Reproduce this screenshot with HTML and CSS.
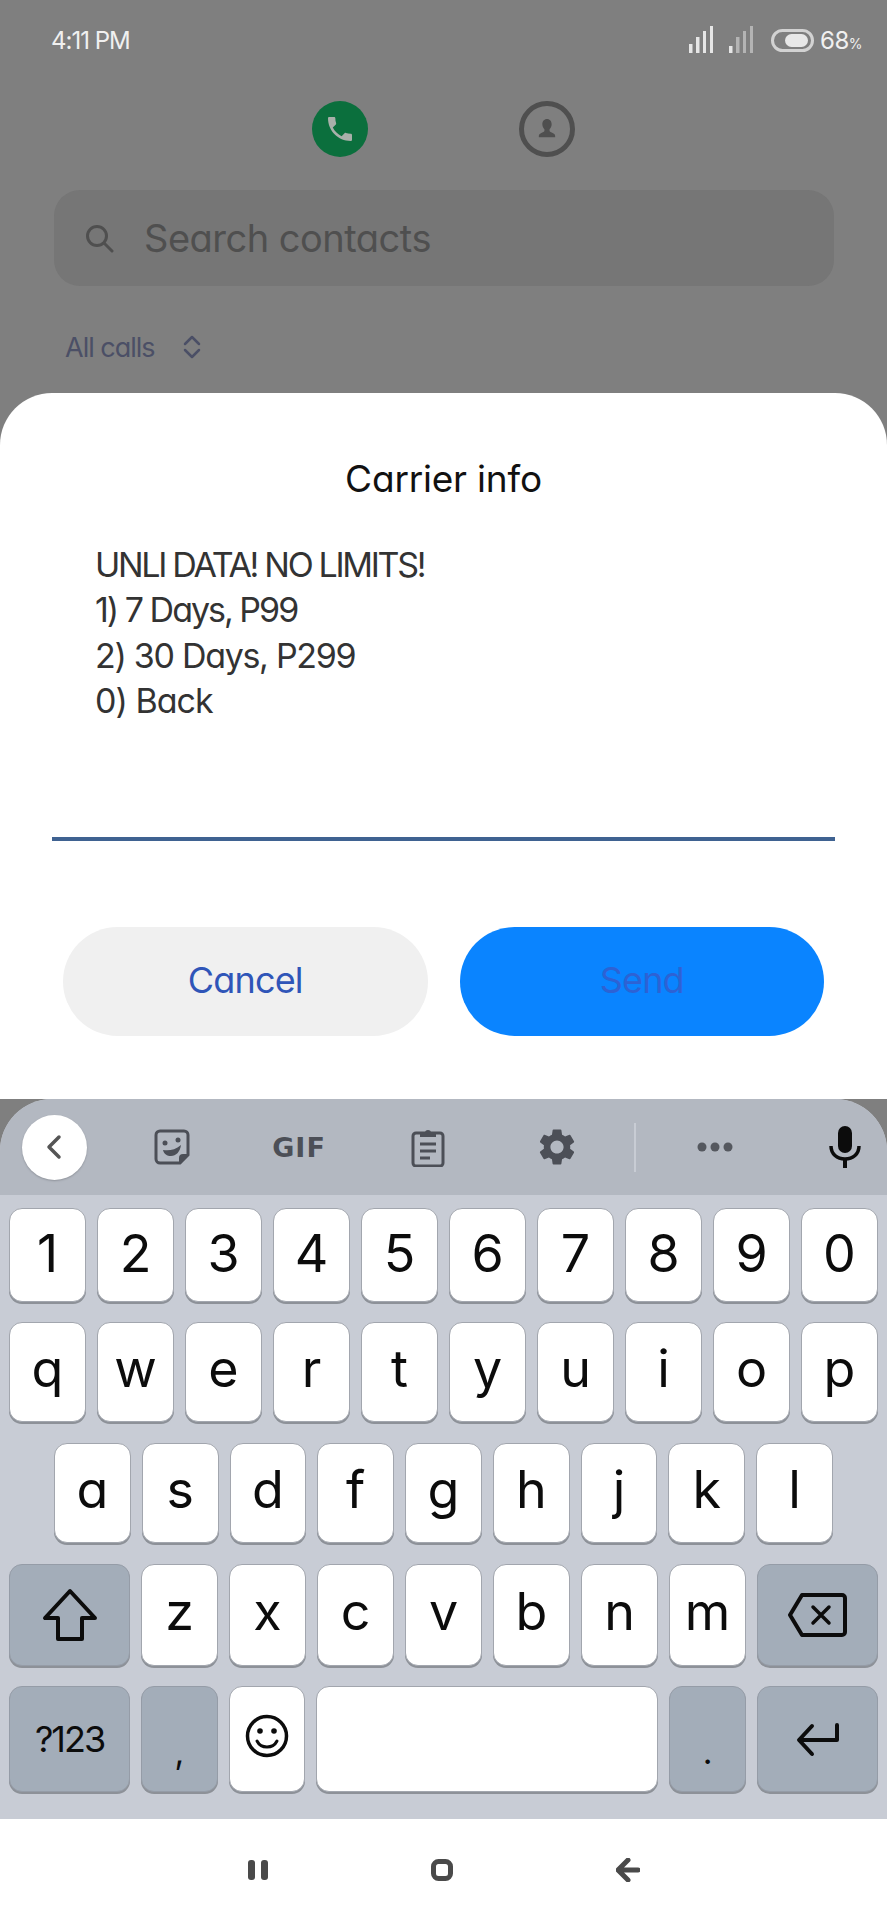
FILE: index.html

```html
<!DOCTYPE html>
<html lang="en">
<head>
    <meta charset="UTF-8">
    <title>Carrier info</title>
    <link rel="stylesheet" href="styles.css">
</head>
<body>
<div class="app">
  <div class="statusbar">
    <span class="time">4:11 PM</span>
    <div class="status-icons">
      <svg class="signal" viewBox="0 0 26 28" width="26" height="28"><g fill="#e6e6e6"><rect x="0" y="18" width="3.500" height="9"/><rect x="7" y="11" width="3.500" height="16"/><rect x="14" y="5" width="3" height="22"/><rect x="21" y="0" width="3" height="27"/></g></svg>
      <svg class="signal" viewBox="0 0 26 28" width="26" height="28"><rect x="0" y="20" width="3.500" height="7" fill="#e6e6e6"/><g fill="#b4b4b4"><rect x="7" y="11" width="3.500" height="16"/><rect x="14" y="5" width="3" height="22"/><rect x="21" y="0" width="3" height="27"/></g></svg>
      <div class="battery"><div class="battery-fill"></div></div>
      <span class="percent">68<small>%</small></span>
    </div>
  </div>

  <div class="tabs">
    <div class="tab tab-on">
      <svg viewBox="0 0 24 24" width="32" height="32"><path fill="#a9b0aa" d="M6.6 10.8c1.4 2.8 3.8 5.1 6.6 6.6l2.2-2.2c.3-.3.7-.4 1-.2 1.1.4 2.300.6 3.600.6.600 0 1 .4 1 1V20c0 .6-.4 1-1 1C10.600 21 3 13.400 3 4c0-.6.400-1 1-1h3.500c.6 0 1 .4 1 1 0 1.300.2 2.500.6 3.600.1.300 0 .7-.2 1z"/></svg>
    </div>
    <div class="tab tab-off">
      <svg viewBox="0 0 24 24" width="28" height="28"><path fill="#4f4f4f" d="M12 3.500c2.500 0 4 2 4 4.500 0 1.800-.8 3.200-1.800 4.200v1.300c0 .8 1.400 1.300 3 2.100 1 .5 1.800 1.100 1.800 2.400v1H5v-1c0-1.300.8-1.900 1.800-2.400 1.600-.8 3-1.300 3-2.100v-1.300C8.800 11.200 8 9.800 8 8c0-2.500 1.500-4.500 4-4.500z"/></svg>
    </div>
  </div>

  <div class="search">
    <svg viewBox="0 0 30 30" width="30" height="30"><circle cx="13" cy="13" r="9.500" fill="none" stroke="#4f4f4f" stroke-width="3"/><path d="M20 20l8 8" stroke="#4f4f4f" stroke-width="3" stroke-linecap="round"/></svg>
    <span>Search contacts</span>
  </div>

  <div class="filter">
    <span>All calls</span>
    <svg viewBox="0 0 20 24" width="20" height="24"><path d="M3 9l7-7 7 7M3 15l7 7 7-7" fill="none" stroke="#4b4f66" stroke-width="2.500" stroke-linecap="round" stroke-linejoin="round"/></svg>
  </div>
</div>

<div class="sheet">
  <h2 class="sheet-title">Carrier info</h2>
  <div class="message">
    <div class="msg-caps">UNLI DATA! NO LIMITS!</div>
    <div class="msg-tight">1) 7 Days, P99</div>
    <div class="msg-loose">2) 30 Days, P299</div>
    <div>0) Back</div>
  </div>
  <div class="reply-line"></div>
  <div class="buttons">
    <div class="btn btn-cancel">Cancel</div>
    <div class="btn btn-send">Send</div>
  </div>
</div>

<div class="keyboard">
  <div class="toolbar">
    <div class="tool">
      <div class="tool-back">
        <svg viewBox="0 0 16 26" width="16" height="26"><path d="M13 3L3 13l10 10" fill="none" stroke="#555" stroke-width="3.500" stroke-linecap="round" stroke-linejoin="round"/></svg>
      </div>
    </div>
    <div class="tool">
      <svg viewBox="0 0 36 36" width="36" height="36"><path d="M6 2h24a4 4 0 0 1 4 4v20l-8 8H6a4 4 0 0 1-4-4V6a4 4 0 0 1 4-4z" fill="none" stroke="#4c4f57" stroke-width="3"/><path d="M34 25h-5a4 4 0 0 0-4 4v5z" fill="#4c4f57"/><circle cx="11" cy="14" r="2.500" fill="#4c4f57"/><circle cx="24" cy="11" r="2.500" fill="#4c4f57"/><path d="M9 21c6 1 12 0 18-5-1 7-5 11-10 11-4 0-7-2-8-6z" fill="#4c4f57"/></svg>
    </div>
    <div class="tool tool-gif">GIF</div>
    <div class="tool">
      <svg viewBox="0 0 34 40" width="34" height="40"><path d="M5 6h24a3 3 0 0 1 3 3v27a3 3 0 0 1-3 3H5a3 3 0 0 1-3-3V9a3 3 0 0 1 3-3z" fill="none" stroke="#4c4f57" stroke-width="3"/><path d="M9 10V6h5a3 3 0 0 1 6 0h5v4z" fill="#4c4f57"/><path d="M9 17h16M9 24h16M9 31h10" stroke="#4c4f57" stroke-width="3"/></svg>
    </div>
    <div class="tool">
      <svg viewBox="0 0 24 24" width="44" height="44"><path fill="#4c4f57" fill-rule="evenodd" d="M19.140 12.940c.04-.3.06-.61.06-.94 0-.32-.02-.64-.07-.94l2.030-1.580a.49.49 0 0 0 .12-.61l-1.920-3.320a.488.488 0 0 0-.59-.22l-2.390.96c-.5-.38-1.030-.7-1.620-.94l-.36-2.540a.484.484 0 0 0-.48-.41h-3.840c-.24 0-.43.17-.47.41l-.36 2.540c-.59.24-1.130.57-1.620.94l-2.390-.96c-.22-.08-.47 0-.59.22L2.740 8.870c-.12.21-.08.47.12.61l2.030 1.580c-.05.3-.09.63-.09.94s.02.64.07.94l-2.030 1.580a.49.49 0 0 0-.12.61l1.920 3.320c.12.22.37.29.59.22l2.390-.96c.5.38 1.030.7 1.620.94l.36 2.540c.05.24.24.41.48.41h3.840c.24 0 .44-.17.47-.41l.36-2.540c.59-.24 1.130-.56 1.620-.94l2.390.96c.22.08.47 0 .59-.22l1.920-3.320c.12-.22.07-.47-.12-.61l-2.010-1.580zM12 15.600c-1.980 0-3.600-1.620-3.600-3.600s1.620-3.600 3.600-3.600 3.600 1.620 3.600 3.600-1.620 3.600-3.600 3.600z"/></svg>
    </div>
    <div class="tool"><div class="tool-divider"></div></div>
    <div class="tool">
      <svg viewBox="0 0 36 10" width="36" height="10"><g fill="#55585f"><circle cx="5" cy="5" r="4.500"/><circle cx="18" cy="5" r="4.500"/><circle cx="31" cy="5" r="4.500"/></g></svg>
    </div>
    <div class="tool tool-mic">
      <svg viewBox="0 0 32 42" width="32" height="42"><rect x="9" y="0" width="14" height="27" rx="7" fill="#0c0c0c"/><path d="M2 20c0 8 6 13 14 13s14-5 14-13" fill="none" stroke="#0c0c0c" stroke-width="3.500"/><rect x="14" y="32" width="4" height="10" fill="#0c0c0c"/></svg>
    </div>
  </div>

  <div class="keys">
    <div class="row row-digits">
      <div class="key">1</div><div class="key">2</div><div class="key">3</div><div class="key">4</div><div class="key">5</div>
      <div class="key">6</div><div class="key">7</div><div class="key">8</div><div class="key">9</div><div class="key">0</div>
    </div>
    <div class="row row-top">
      <div class="key">q</div><div class="key">w</div><div class="key">e</div><div class="key">r</div><div class="key">t</div>
      <div class="key">y</div><div class="key">u</div><div class="key">i</div><div class="key">o</div><div class="key">p</div>
    </div>
    <div class="row row-home">
      <div class="key">a</div><div class="key">s</div><div class="key">d</div><div class="key">f</div><div class="key">g</div>
      <div class="key">h</div><div class="key">j</div><div class="key">k</div><div class="key">l</div>
    </div>
    <div class="row row-bottom">
      <div class="key key-fn key-wide">
        <svg viewBox="0 0 56 54" width="56" height="54"><path d="M28 3L3 30h13v21h24V30h13z" fill="none" stroke="#0c0c0c" stroke-width="4" stroke-linejoin="round"/></svg>
      </div>
      <div class="key">z</div><div class="key">x</div><div class="key">c</div><div class="key">v</div>
      <div class="key">b</div><div class="key">n</div><div class="key">m</div>
      <div class="key key-fn key-wide">
        <svg viewBox="0 0 60 46" width="60" height="46"><path d="M14 3h40a3 3 0 0 1 3 3v34a3 3 0 0 1-3 3H14L2 23z" fill="none" stroke="#0c0c0c" stroke-width="4" stroke-linejoin="round"/><path d="M25 15l16 16M41 15L25 31" stroke="#0c0c0c" stroke-width="3.500" stroke-linecap="round"/></svg>
      </div>
    </div>
    <div class="row row-space">
      <div class="key key-fn key-wide key-sym">?123</div>
      <div class="key key-fn key-punct">,</div>
      <div class="key">
        <svg viewBox="0 0 44 44" width="44" height="44"><circle cx="22" cy="22" r="19.500" fill="none" stroke="#0c0c0c" stroke-width="3.500"/><circle cx="15" cy="17" r="2.800" fill="#0c0c0c"/><circle cx="29" cy="17" r="2.800" fill="#0c0c0c"/><path d="M12 27c2 4 6 6 10 6s8-2 10-6" fill="none" stroke="#0c0c0c" stroke-width="3" stroke-linecap="round"/></svg>
      </div>
      <div class="key key-spacebar"></div>
      <div class="key key-fn key-punct">.</div>
      <div class="key key-fn key-wide">
        <svg viewBox="0 0 44 36" width="44" height="36"><path d="M41 4v15H4M16 5L3 19l13 14" fill="none" stroke="#0c0c0c" stroke-width="4" stroke-linecap="round" stroke-linejoin="round"/></svg>
      </div>
    </div>
  </div>
</div>

<div class="navbar">
  <svg viewBox="0 0 20 20" width="20" height="20"><rect x="0" y="0" width="7" height="20" rx="3" fill="#4a4a4a"/><rect x="13" y="0" width="7" height="20" rx="3" fill="#4a4a4a"/></svg>
  <svg viewBox="0 0 22 22" width="22" height="22"><rect x="2.500" y="2.500" width="17" height="17" rx="5" fill="none" stroke="#4a4a4a" stroke-width="5"/></svg>
  <svg viewBox="0 0 24 24" width="24" height="24"><path d="M12 2L2 12l10 10M3 12h19" fill="none" stroke="#4a4a4a" stroke-width="5" stroke-linecap="round" stroke-linejoin="round"/></svg>
</div>
</body>
</html>
```

FILE: styles.css

```css
* {
    box-sizing: border-box;
}
body {
    margin: 0;
    width: 887px;
    height: 1920px;
    overflow: hidden;
    background: #7f7f7f;
    font-family: Inter, Lato, sans-serif;
    font-feature-settings: "cv11";
    display: flex;
    flex-direction: column;
}

/* dimmed dialer behind the sheet */
.app {
    height: 393px;
    flex: none;
}
.statusbar {
    height: 80px;
    padding: 0 25px 0 51px;
    display: flex;
    align-items: center;
    justify-content: space-between;
    color: #f0f0f0;
}
.time {
    font-size: 24px;
    letter-spacing: -1px;
}
.status-icons {
    display: flex;
    align-items: center;
}
.signal {
    margin-right: 14px;
}
.signal + .battery {
    margin-left: 2px;
}
.battery {
    width: 43px;
    height: 23px;
    border: 3px solid #d2d2d2;
    border-radius: 12px;
    padding: 2px 3px 2px 11px;
    margin-right: 6px;
}
.battery-fill {
    height: 100%;
    background: #e8e8e8;
    border-radius: 7px;
}
.percent {
    font-size: 24px;
    letter-spacing: -.500px;
}
.percent small {
    font-size: 14px;
}
.tabs {
    margin-top: 21px;
    display: flex;
    justify-content: center;
    gap: 151px;
}
.tab {
    width: 56px;
    height: 56px;
    border-radius: 50%;
    display: flex;
    align-items: center;
    justify-content: center;
}
.tab-on {
    background: #0b6f3d;
}
.tab-off {
    border: 5px solid #4f4f4f;
}
.search {
    margin: 33px 53px 0 54px;
    height: 96px;
    background: #767676;
    border-radius: 26px;
    padding-left: 30px;
    display: flex;
    align-items: center;
    gap: 30px;
    font-size: 38px;
    letter-spacing: -.500px;
    color: #4f4f4f;
}
.filter {
    margin: 46px 0 0 65px;
    height: 30px;
    display: flex;
    align-items: center;
    gap: 27px;
    font-size: 27px;
    letter-spacing: -1px;
    color: #4b4f66;
}

/* carrier dialog */
.sheet {
    height: 706px;
    flex: none;
    background: #fff;
    border-radius: 52px 52px 0 0;
    padding-top: 64px;
}
.sheet-title {
    margin: 0;
    height: 44px;
    line-height: 44px;
    text-align: center;
    font-size: 37px;
    font-weight: 400;
    letter-spacing: -.200px;
    color: #111;
}
.message {
    margin: 41px 0 0 95px;
    font-size: 34px;
    line-height: 45.300px;
    letter-spacing: -1px;
    color: #333;
}
.msg-caps {
    letter-spacing: -2.300px;
}
.msg-tight {
    letter-spacing: -2px;
}
.msg-loose {
    letter-spacing: -1.300px;
}
.reply-line {
    margin: 114px 52px 0;
    height: 4px;
    background: #3f6291;
}
.buttons {
    margin-top: 86px;
    padding: 0 63px;
    display: flex;
    gap: 32px;
}
.btn {
    flex: 1;
    height: 109px;
    border-radius: 55px;
    display: flex;
    align-items: center;
    justify-content: center;
    font-size: 36px;
    letter-spacing: -.800px;
    padding-bottom: 3px;
}
.btn-cancel {
    background: #f0f0f0;
    color: #2f55b8;
}
.btn-send {
    background: #0a84ff;
    color: #2d62d4;
}

/* keyboard */
.keyboard {
    height: 720px;
    flex: none;
    border-radius: 52px 52px 0 0;
    overflow: hidden;
    background: #c8ccd5;
}
.toolbar {
    height: 96px;
    background: #b3b8c1;
    display: grid;
    grid-template-columns: 108px 128px 126px 132px 126px 30px 130px 1fr;
    align-items: center;
    justify-items: center;
}
.tool {
    display: flex;
    align-items: center;
    justify-content: center;
}
.tool-back {
    width: 65px;
    height: 65px;
    border-radius: 50%;
    background: #fff;
    display: flex;
    align-items: center;
    justify-content: center;
    box-shadow: 0 1px 2px #8f939b;
}
.tool-gif {
    font-family: "DejaVu Sans", sans-serif;
    font-weight: bold;
    font-size: 27px;
    letter-spacing: 1px;
    color: #4c4f57;
}
.tool-divider {
    width: 2px;
    height: 49px;
    background: #c8ccd4;
}
.tool-mic {
    justify-self: end;
    margin-right: 26px;
}
.keys {
    padding: 13px 9px 0 9px;
    display: flex;
    flex-direction: column;
}
.row {
    display: flex;
    gap: 11px;
    margin-bottom: 20px;
    height: 100px;
}
.row-digits {
    height: 94px;
}
.row-home {
    padding: 0 45px;
    margin-bottom: 21px;
}
.row-top {
    margin-bottom: 21px;
}
.row-bottom {
    height: 102px;
}
.row-space {
    height: 106px;
}
.key {
    flex: 1 1 0;
    min-width: 0;
    background: #fff;
    border: 1px solid #a2a6ae;
    border-radius: 13px;
    box-shadow: 0 2px 0 #8d9198;
    display: flex;
    align-items: center;
    justify-content: center;
    font-size: 52px;
    font-weight: 400;
    color: #0c0c0c;
    line-height: 1;
    padding-bottom: 6px;
}
.row-digits .key {
    padding-bottom: 2px;
}
.key-fn {
    background: #a3adb9;
    border-color: #959ca7;
    padding-bottom: 0;
}
.key-wide {
    flex: none;
    width: 121px;
}
.key-sym {
    font-size: 36px;
    letter-spacing: -2px;
}
.key-punct {
    font-size: 34px;
    align-items: flex-end;
    padding-bottom: 22px;
}
.key-spacebar {
    flex: none;
    width: 342px;
}
.navbar {
    flex: 1;
    background: #fff;
    display: flex;
    align-items: center;
    justify-content: center;
    gap: 163px;
}
```
